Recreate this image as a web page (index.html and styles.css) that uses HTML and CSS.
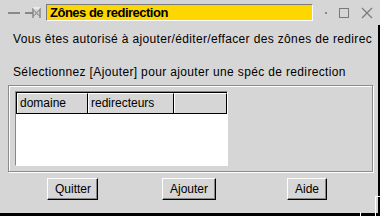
FILE: index.html
```html
<!DOCTYPE html>
<html lang="fr">
<head>
    <meta charset="UTF-8">
    <title>Zônes de redirection</title>
    <link rel="stylesheet" href="styles.css">
</head>
<body>
    <div class="window">
        <div class="titlebar">
            <span class="tb-min"></span>
            <svg class="tb-pin" width="16" height="12" viewBox="0 0 16 12">
                <line x1="0" y1="6" x2="8" y2="6" stroke="#888" stroke-width="2"/>
                <line x1="8" y1="1" x2="8" y2="11" stroke="#888" stroke-width="1.5"/>
                <line x1="15" y1="1" x2="15" y2="11" stroke="#888" stroke-width="1.5"/>
                <path d="M8 3 L11 5 L11 7 L8 9 M15 3 L12 5 L12 7 L15 9" fill="none" stroke="#888" stroke-width="1"/>
                <line x1="8" y1="1" x2="15" y2="1" stroke="#fff" stroke-width="1"/>
            </svg>
            <div class="title">Zônes de redirection</div>
            <span class="tb-dot"></span>
            <span class="tb-max"></span>
            <svg class="tb-close" width="12" height="12" viewBox="0 0 12 12">
                <path d="M1 1 L11 11 M11 1 L1 11" stroke="#7a7a7a" stroke-width="1.2"/>
            </svg>
        </div>
        <div class="content">
            <p class="msg first">Vous êtes autorisé à ajouter/éditer/effacer des zônes de redirec</p>
            <p class="msg">Sélectionnez [Ajouter] pour ajouter une spéc de redirection</p>
            <div class="group">
                <div class="list">
                    <div class="list-head">
                        <div class="col col-dom">domaine</div>
                        <div class="col col-red">redirecteurs</div>
                        <div class="col col-end"></div>
                    </div>
                    <div class="list-body"></div>
                </div>
            </div>
            <div class="buttons">
                <button class="btn-quit">Quitter</button>
                <button class="btn-add">Ajouter</button>
                <button class="btn-help">Aide</button>
            </div>
        </div>
        <div class="grip"></div>
        <div class="grip-notch"></div>
    </div>
</body>
</html>
```

FILE: styles.css
```css
body {
    margin: 0;
    font-family: "Liberation Sans", Arial, sans-serif;
    background: #d6d6d6;
}

.window {
    position: relative;
    width: 380px;
    height: 216px;
    background: #d6d6d6;
    overflow: hidden;
}

.titlebar {
    display: flex;
    align-items: center;
    height: 25px;
    padding-left: 8px;
}

.tb-min {
    width: 12px;
    height: 2px;
    background: #8a8a8a;
    margin-right: 5px;
}

.tb-pin {
    margin-right: 5px;
}

.title {
    width: 262px;
    height: 15px;
    background: #ffd700;
    border: 1px solid;
    border-color: #7a7a7a #fff #fff #7a7a7a;
    padding-left: 3px;
    font-size: 13px;
    font-weight: bold;
    line-height: 15px;
    color: #000;
    letter-spacing: -0.5px;
}

.tb-dot {
    width: 2px;
    height: 2px;
    background: #888;
    margin-left: 12px;
}

.tb-max {
    width: 8px;
    height: 8px;
    border: 1px solid #7a7a7a;
    margin-left: 12px;
}

.tb-close {
    margin-left: 12px;
}

.content {
    height: 188px;
    border-right: 2px solid #000;
    border-bottom: 3px solid #000;
}

.msg {
    margin: 0;
    padding-left: 13px;
    font-size: 12px;
    line-height: 14px;
    letter-spacing: 0.35px;
    white-space: nowrap;
    color: #000;
}

.msg.first {
    padding-top: 7px;
    margin-bottom: 19px;
}

.group {
    margin: 6px 0 0 8px;
    width: 357px;
    height: 80px;
    border: 1px solid #8c8c8c;
    box-shadow: inset 1px 1px 0 #fff, 1px 1px 0 #fff;
    padding: 5px 0 0 6px;
}

.list {
    width: 211px;
    height: 73px;
    border: 1px solid;
    border-color: #888 #fff #fff #888;
    background: #fff;
}

.list-head {
    display: flex;
    height: 20px;
    border-top: 1px solid #000;
    border-left: 1px solid #000;
    border-bottom: 1px solid #000;
}

.col {
    height: 20px;
    box-sizing: border-box;
    background: #d6d6d6;
    border-top: 1px solid #fff;
    border-left: 1px solid #fff;
    border-right: 1px solid #000;
    font-size: 12px;
    line-height: 19px;
    padding-left: 2px;
}

.col-dom {
    width: 71px;
}

.col-red {
    width: 86px;
}

.col-end {
    width: 53px;
}

.buttons {
    display: flex;
    margin-top: 6px;
    padding-left: 47px;
}

button {
    font-family: "Liberation Sans", Arial, sans-serif;
    font-size: 12px;
    color: #000;
    background: #d6d6d6;
    border: 1px solid;
    border-color: #fff #000 #000 #fff;
    box-shadow: inset -1px -1px 0 #888;
    height: 22px;
    padding: 0 7px;
}

.btn-quit {
    width: 51px;
}

.btn-add {
    width: 54px;
    margin-left: 64px;
}

.btn-help {
    width: 40px;
    margin-left: 71px;
}

.grip {
    position: absolute;
    right: 0;
    bottom: 0;
    width: 4px;
    height: 19px;
    border-left: 1px solid #fff;
    border-top: 1px solid #fff;
}

.grip-notch {
    position: absolute;
    left: 360px;
    bottom: 0;
    width: 1px;
    height: 4px;
    background: #fff;
}
```
